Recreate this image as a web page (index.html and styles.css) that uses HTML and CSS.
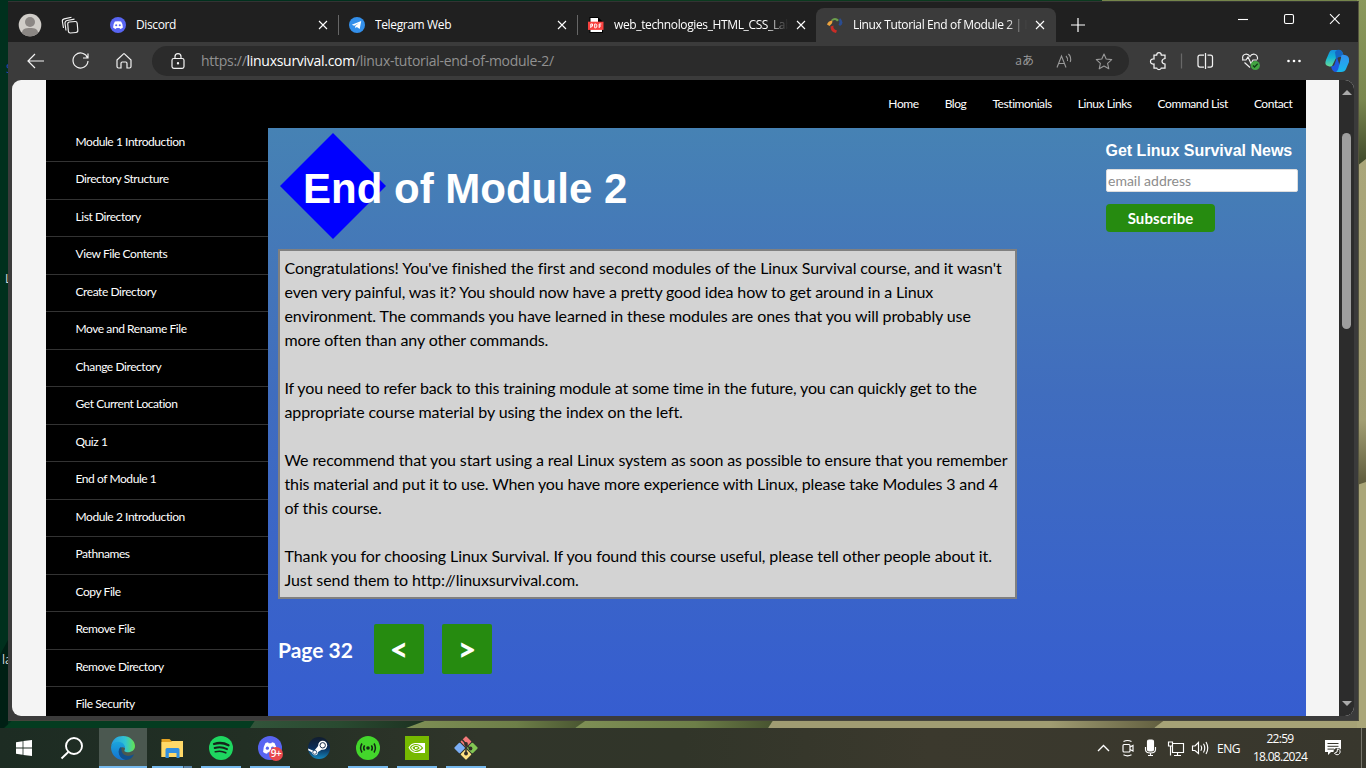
FILE: index.html
```html
<!DOCTYPE html>
<html lang="en">
<head>
<meta charset="utf-8">
<title>Linux Tutorial End of Module 2</title>
<link rel="stylesheet" href="styles.css">
</head>
<body>
<div class="desktop">
  <svg class="wallpaper" width="1366" height="768" viewBox="0 0 1366 768">
    <defs>
      <linearGradient id="wa" x1="0" x2="1"><stop offset="0" stop-color="#32543a"/><stop offset=".5" stop-color="#294a30"/><stop offset="1" stop-color="#1c3020"/></linearGradient>
      <linearGradient id="wb" x1="0" x2="1"><stop offset="0" stop-color="#7f8f55"/><stop offset=".6" stop-color="#6d7e48"/><stop offset="1" stop-color="#46522f"/></linearGradient>
      <linearGradient id="wc" x1="0" x2="1"><stop offset="0" stop-color="#a09c72"/><stop offset=".7" stop-color="#a09c72"/><stop offset="1" stop-color="#5d5a3c"/></linearGradient>
      <linearGradient id="wd" x1="0" x2="0" y1="0" y2="1"><stop offset="0" stop-color="#8b995c"/><stop offset=".6" stop-color="#7a874f"/><stop offset="1" stop-color="#3f482a"/></linearGradient>
      <linearGradient id="we" x1="0" x2="0" y1="0" y2="1"><stop offset="0" stop-color="#aaa67a"/><stop offset=".8" stop-color="#a29e73"/><stop offset="1" stop-color="#5c593b"/></linearGradient>
    </defs>
    <rect width="1366" height="768" fill="#00301d"/>
    <path d="M0 655 8 640V728H0z" fill="#001f14"/>
    <path d="M4 728 14 719H260V728z" fill="#043c20"/>
    <path d="M250 728 256 719H430L406 728z" fill="url(#wa)"/>
    <path d="M406 728 430 719H590L575 728z" fill="url(#wb)"/>
    <path d="M575 728 588 719H775L768 728z" fill="url(#wb)"/>
    <path d="M768 728 774 719H1170L1154 728z" fill="url(#wc)"/>
    <path d="M1154 728 1166 719H1366V728z" fill="#a6a276"/>
    <rect x="540" width="562" height="2" fill="#0b3a1f"/>
    <rect x="1102" width="264" height="2" fill="#75854b"/>
    <rect x="1357" width="9" height="165" fill="url(#wd)"/>
    <path d="M1357 166 1366 159V483L1357 486z" fill="url(#we)"/>
    <path d="M1357 485 1366 482V728H1357z" fill="#aaa679"/>
  </svg>
  <span class="desk-label dl-1">S</span>
  <span class="desk-label dl-2">L</span>
  <span class="desk-label dl-3">la</span>

  <div class="window">
    <div class="tabstrip">
      <svg class="avatar" width="24" height="24" viewBox="0 0 24 24"><circle cx="12" cy="12" r="11.3" fill="#d0cdc8"/><circle cx="12" cy="9" r="5" fill="#8b8784"/><path d="M4 20c0-4 3-5 8-5s8 1 8 5a11 11 0 0 1-16 0z" fill="#8b8784"/></svg>
      <svg class="workspaces" width="18" height="18" viewBox="0 0 18 18" fill="none" stroke="#f2f2f2" stroke-width="1.15"><rect x="7" y="5.8" width="9.5" height="11" rx="2" transform="rotate(-5 11 11)"/><path d="M5 14.5 4 7.3Q3.9 5 6 4.5L13.5 3.1M2.5 12 1.4 5.5Q1.1 3.4 3.2 2.9L10.5 1.2"/></svg>
      <div class="tab t1">
        <svg width="16" height="16" viewBox="0 0 16 16"><circle cx="8" cy="8" r="8" fill="#5865f2"/><path d="M4.9 4.6Q8 3.8 11.1 4.6 13 7.3 12.9 10.6 11.5 11.7 10.2 11.9L9.5 10.9H6.5L5.8 11.9Q4.5 11.7 3.1 10.6 3 7.3 4.9 4.6z" fill="#fff"/><circle cx="6.2" cy="8.2" r="1.05" fill="#5865f2"/><circle cx="9.8" cy="8.2" r="1.05" fill="#5865f2"/></svg>
        <span class="tab-title">Discord</span>
        <svg class="x" width="10" height="10" viewBox="0 0 10 10"><path d="M1 1l8 8M9 1 1 9"/></svg>
      </div>
      <div class="tab t2">
        <svg width="16" height="16" viewBox="0 0 16 16"><circle cx="8" cy="8" r="8" fill="#338fea"/><path d="M2.8 7.8 12.2 4 10.7 12 7.8 9.9 6.4 11.3 6.2 9 10 5.9 5.2 8.8z" fill="#fff"/></svg>
        <span class="tab-title">Telegram Web</span>
        <svg class="x" width="10" height="10" viewBox="0 0 10 10"><path d="M1 1l8 8M9 1 1 9"/></svg>
      </div>
      <div class="tab t3">
        <svg width="16" height="16" viewBox="0 0 16 16"><path d="M1.5 0H10L15 5V16H1.5z" fill="#000"/><path d="M2.5 1H10V5H14V15H2.5z" fill="#fff"/><rect x="0" y="4.7" width="15.5" height="8.2" fill="#f8413f"/><g fill="none" stroke="#fff" stroke-width="1"><path d="M2.8 11V7H4.5V9.2H2.8M6.7 7V10.8H7.7Q8.9 10.8 8.9 8.9T7.7 7zM11.2 11V7H13.3M11.2 9H13"/></g></svg>
        <span class="tab-title fade">web_technologies_HTML_CSS_Lab</span>
        <svg class="x" width="10" height="10" viewBox="0 0 10 10"><path d="M1 1l8 8M9 1 1 9"/></svg>
      </div>
      <div class="tab t4 active">
        <svg width="16" height="16" viewBox="0 0 16 16"><path d="M4 3Q8-1 12 3L10 4.500Q8 2 5.500 4z" fill="#6c9f4c"/><path d="M13 1Q18 6 13 9L11.500 7.500Q13 6 12 3z" fill="#2a4c91"/><path d="M5 3.500Q6.500 5.500 2.500 9L0 7.500Q1 4 5 3.500z" fill="#eca33e"/><path d="M3.500 9.500 6.500 8.500Q5.500 12 10 13.500L9 16Q3.500 15 3.500 9.500z" fill="#c92c26"/></svg>
        <span class="tab-title fade">Linux Tutorial End of Module 2 | Linux</span>
        <svg class="x" width="10" height="10" viewBox="0 0 10 10"><path d="M1 1l8 8M9 1 1 9"/></svg>
      </div>
      <svg class="plus" width="14" height="14" viewBox="0 0 14 14" fill="none" stroke="#fff" stroke-width="1.2"><path d="M7 0V14M0 7H14"/></svg>
      <svg class="winbtns" width="104" height="12" viewBox="0 0 104 12" fill="none" stroke="#fff" stroke-width="1.1"><path d="M1 6.5H11"/><rect x="47.5" y="1.5" width="9" height="9" rx="1.5"/><path d="M93 1.2l9.6 9.6M102.600 1.200 93 10.800"/></svg>
    </div>

    <div class="toolbar">
      <svg class="nav-icons" width="110" height="20" viewBox="0 0 110 20" fill="none" stroke="#f4f4f4" stroke-width="1.2"><path d="M8 3 1 10 8 17M1 10H17"/><path d="M60.600 7A7.500 7.500 0 1 0 61 10M61 2.500V7H56"/><path d="M90 9 96.500 2.900Q97 2.500 97.500 2.900L104 9V15.500Q104 17 102.500 17H100V12.500Q100 11 98.700 11H95.300Q94 11 94 12.500V17H91.500Q90 17 90 15.500z"/></svg>
      <div class="address">
        <svg width="14" height="16" viewBox="0 0 14 16" fill="none" stroke="#f4f4f4" stroke-width="1.2"><rect x="1" y="5.500" width="12" height="9.800" rx="1.800"/><path d="M4 5.500V3.600A3 3 0 0 1 10 3.600V5.500"/><circle cx="7" cy="10.300" r=".6" fill="#fff"/></svg>
        <span class="url">https://<b>linuxsurvival.com</b>/linux-tutorial-end-of-module-2/</span>
        <span class="translate">aあ</span>
        <svg class="read" width="17" height="16" viewBox="0 0 17 16" fill="none" stroke="#999" stroke-width="1.1"><path d="M1 14.500 5.500 3 10 14.500M2.700 10.500H8.300M10 3Q12 5 11.500 8M12.400 1Q15.800 4.300 14.200 9"/></svg>
        <svg class="star" width="18" height="17" viewBox="0 0 18 17" fill="none" stroke="#999" stroke-width="1.1" stroke-linejoin="round"><path d="M9 1 11.200 6 16.700 6.600 12.600 10.300 13.800 15.800 9 13 4.200 15.800 5.400 10.300 1.300 6.600 6.800 6z"/></svg>
      </div>
      <svg class="tools" width="156" height="26" viewBox="0 0 156 26" fill="none" stroke="#f2f2f2" stroke-width="1.25">
        <path d="M6 7H8.700Q8.800 4.500 11 4.500T13.300 7H17V10.500Q14 11 14 13.300T17 16V20H13.300Q13 21.500 11 21.500T8.700 20H6V16Q2.500 16.200 2.500 13.500T6 11z"/>
        <path d="M33.500 5.500V20.500" stroke="#686868"/>
        <path d="M56 7H52Q50 7 50 9V17Q50 19 52 19H56M59.500 7H62.500Q64.500 7 64.500 9V17Q64.500 19 62.500 19H59.500M57.500 5V21"/>
        <path d="M102 19.500 96.500 14.500M95 12Q93.500 7 97.500 6.200 100.500 5.700 102 8.500 103.500 5.700 106.500 6.200 110 7 109.500 11.500" stroke-width="1.150"/><path d="M94 12H98L100 9 103 15.500 105 12H109" stroke-width="1.150"/>
        <circle cx="107.300" cy="17.500" r="4.600" fill="#42a442" stroke="none"/><path d="M105 17.500 106.500 19 109.700 15.800" stroke="#123d18"/>
        <g fill="#fff" stroke="none"><circle cx="140.500" cy="13" r="1.300"/><circle cx="146" cy="13" r="1.300"/><circle cx="151.500" cy="13" r="1.300"/></g>
      </svg>
      <svg class="copilot" width="26" height="26" viewBox="0 0 26 26"><defs><linearGradient id="cp" x1="0" x2="0" y1="0" y2="1"><stop offset="0" stop-color="#168fdd"/><stop offset=".45" stop-color="#12b4d5"/><stop offset="1" stop-color="#68db98"/></linearGradient><linearGradient id="cq" x1="0" x2="0" y1="0" y2="1"><stop offset="0" stop-color="#3290f0"/><stop offset="1" stop-color="#17b9ed"/></linearGradient></defs><path d="M8 2H15Q18 2 19 6L21 9H14Q12 9 11 12L8 18Q7 19 4 18 0 17 2 12L5 5Q6 2 8 2z" fill="url(#cp)"/><path d="M13 2Q18 1 19 6L20 9Q15 8 12 11L11 4z" fill="#1567c4"/><path d="M7 18Q10 19 11 15L13 9 17 22Q15 24 12 24 8 24 7 18z" fill="#1e59df"/><path d="M18 7H21Q26 8 25 14L22 21Q21 24 17 24H12Q14 23 15 18L17 10Q17 7 18 7z" fill="url(#cq)"/></svg>
    </div>

    <div class="viewport">
      <div class="site">
        <nav class="topnav"><a>Home</a><a>Blog</a><a>Testimonials</a><a>Linux Links</a><a>Command List</a><a>Contact</a></nav>
        <div class="site-body">
          <ul class="sidebar">
            <li>Module 1 Introduction</li><li>Directory Structure</li><li>List Directory</li><li>View File Contents</li><li>Create Directory</li><li>Move and Rename File</li><li>Change Directory</li><li>Get Current Location</li><li>Quiz 1</li><li>End of Module 1</li><li>Module 2 Introduction</li><li>Pathnames</li><li>Copy File</li><li>Remove File</li><li>Remove Directory</li><li>File Security</li>
          </ul>
          <main class="main">
            <div class="lesson">
              <div class="heading">
                <svg class="diamond" width="106" height="106" viewBox="0 0 106 106"><path d="M53 0 106 53 53 106 0 53z" fill="#00f"/></svg>
                <h1>End of Module 2</h1>
              </div>
              <div class="textbox">
                <p><span class="ls-1">Congratulations! You've finished the first and second modules of the Linux Survival course, and it wasn't</span><br><span class="ls-3">even very painful, was it? You should now have a pretty good idea how to get around in a Linux</span><br><span class="ls-2">environment. The commands you have learned in these modules are ones that you will probably use</span><br><span class="ls-2">more often than any other commands.</span></p>
                <p><span class="ls-3">If you need to refer back to this training module at some time in the future, you can quickly get to the</span><br><span class="ls-2">appropriate course material by using the index on the left.</span></p>
                <p><span class="ls-2">We recommend that you start using a real Linux system as soon as possible to ensure that you remember</span><br><span class="ls-3">this material and put it to use. When you have more experience with Linux, please take Modules 3 and 4</span><br><span class="ls-1">of this course.</span></p>
                <p><span class="ls-2">Thank you for choosing Linux Survival. If you found this course useful, please tell other people about it.</span><br><span class="ls-1">Just send them to http://linuxsurvival.com.</span></p>
              </div>
              <div class="pager"><span>Page 32</span><button>&lt;</button><button>&gt;</button></div>
            </div>
            <aside class="news">
              <h2>Get Linux Survival News</h2>
              <input type="text" placeholder="email address">
              <button>Subscribe</button>
            </aside>
          </main>
        </div>
      </div>
      <div class="scrollbar"><i class="up"></i><i class="thumb"></i><i class="down"></i></div>
    </div>
  </div>

  <div class="taskbar">
    <div class="task start"><svg width="16" height="16" viewBox="0 0 16 16" fill="#fff"><path d="M0 2.200 6.600 1.200V7.500H0zM7.400 1.100 16 0V7.500H7.400zM0 8.400H6.600V14.700L0 13.800zM7.400 8.400H16V16L7.400 14.900z"/></svg></div>
    <div class="task search"><svg width="24" height="24" viewBox="0 0 24 24" fill="none" stroke="#fff" stroke-width="1.900"><circle cx="14" cy="10" r="8"/><path d="M8.300 16 1.500 22.500"/></svg></div>
    <div class="task open on"><svg width="24" height="24" viewBox="0 0 24 24"><defs><linearGradient id="e1" x1="0" x2="1"><stop offset="0" stop-color="#269be0"/><stop offset=".6" stop-color="#31c4d2"/><stop offset="1" stop-color="#65e34e"/></linearGradient><linearGradient id="e2" x1="0" x2="0" y1="0" y2="1"><stop offset="0" stop-color="#1ba5dc"/><stop offset="1" stop-color="#1471cf"/></linearGradient></defs><path d="M0 11C1 3 6 0 12 0c7 0 12 5 12 10 0 5-5 7-9 6-2-1-2-1-1-3 0-4-4-6-8-6-3 0-5 1-6 4z" fill="url(#e1)"/><path d="M0 11C1 7 5 5 9 6c4 1 5 4 5 6-4-2-7 1-6 5 1 4 4 6 7 7C7 25 0 20 0 11z" fill="url(#e2)"/><path d="M10 11c-4 2-3 12 5 13 4 0 7-3 8-6-6 4-11 1-12-2-1-2 0-4-1-5z" fill="#12508d"/></svg></div>
    <div class="task open group"><svg width="24" height="24" viewBox="0 0 24 24"><path d="M1.500 3H9.500L11.500 5H22V21H1.500z" fill="#e4a323"/><path d="M1.500 6H11L12.500 5H23V21H1.500z" fill="#ffd968"/><path d="M5.500 13.500Q5.500 12 7 12H18Q19.500 12 19.500 13.500V22H16.500V17H8.800V22H5.500z" fill="#318fe0"/></svg></div>
    <div class="task open"><svg width="24" height="24" viewBox="0 0 24 24"><circle cx="12" cy="12" r="12" fill="#1ed760"/><g fill="none" stroke="#15251c" stroke-linecap="round"><path d="M5 8Q12.500 5.500 19.500 9.200" stroke-width="2.300"/><path d="M5.700 12Q12 10 18 13.100" stroke-width="2"/><path d="M6.300 15.800Q12 14.200 16.800 16.800" stroke-width="1.600"/></g></svg></div>
    <div class="task open discord"><svg width="24" height="24" viewBox="0 0 24 24"><circle cx="12" cy="12" r="12" fill="#5865f2"/><path d="M7.500 7 10 6.200 10.700 7.200H13.300L14 6.200 16.500 7Q19 11 18.900 16 17 17.500 15 17.800L14 16.300H10L9 17.800Q7 17.500 5.100 16 5 11 7.500 7z" fill="#fff"/><circle cx="9.400" cy="12.200" r="1.600" fill="#5865f2"/><circle cx="14.600" cy="12.200" r="1.600" fill="#5865f2"/></svg><span class="badge">9+</span></div>
    <div class="task"><svg width="24" height="24" viewBox="0 0 24 24"><defs><linearGradient id="st" x1="0" x2="0" y1="0" y2="1"><stop offset="0" stop-color="#111d2e"/><stop offset=".5" stop-color="#0b2c57"/><stop offset="1" stop-color="#1487bd"/></linearGradient></defs><circle cx="12" cy="12" r="11" fill="url(#st)"/><circle cx="15.700" cy="9.300" r="4.500" fill="#fff"/><circle cx="15.700" cy="9.300" r="2.700" fill="none" stroke="#152947" stroke-width="1"/><path d="M1 12.500 7 15 11.500 9.500 15 13.500 11 16Q10.500 20 7 19 5 18 4.500 16L1.500 14.500z" fill="#fff"/><circle cx="7.700" cy="16.300" r="2" fill="none" stroke="#163c64" stroke-width=".8"/></svg></div>
    <div class="task open"><svg width="24" height="24" viewBox="0 0 24 24"><circle cx="12" cy="12" r="12" fill="#43d62b"/><g fill="none" stroke="#122814" stroke-width="1.500"><path d="M8.600 9.300Q6.800 12 8.600 14.700M15.400 9.300Q17.200 12 15.400 14.700M6 7.500Q3.200 12 6 16.500M18 7.500Q20.800 12 18 16.500"/></g><circle cx="12" cy="12" r="1.800" fill="#122814"/></svg></div>
    <div class="task open"><svg width="24" height="24" viewBox="0 0 24 24"><rect width="24" height="24" fill="#76b900"/><path d="M10 7H20V17H10z" fill="#fff"/><g fill="none" stroke="#fff" stroke-width="1.200"><path d="M10 7.500Q6 8 4.200 11.500 6 15.500 10 16.300"/><path d="M10 9.500Q7.600 10 6.800 11.700 8 14 10 14.300"/></g><g fill="none" stroke="#76b900" stroke-width="1.200"><path d="M10 8.500Q15 8.200 17.500 12 14.500 15.500 10 15.500M10 10.500Q13 10.200 14 12 12.500 13.700 10 13.500"/></g></svg></div>
    <div class="task open"><svg width="24" height="24" viewBox="0 0 24 24"><g transform="rotate(45 12 12)"><rect x="3.500" y="3.500" width="8" height="8" rx="1" fill="#f47a7a"/><rect x="12.500" y="3.500" width="8" height="8" rx="1" fill="#82c653"/><rect x="3.500" y="12.500" width="8" height="8" rx="1" fill="#7baef5"/><rect x="12.500" y="12.500" width="8" height="8" rx="1" fill="#ffe383"/></g><path d="M8 3.500 12 8V18M12 9 16.500 12.500" fill="none" stroke="#38342d" stroke-width="1.500"/><g fill="#302d28"><circle cx="12" cy="8" r="1.900"/><circle cx="12" cy="17.500" r="1.900"/><circle cx="16.500" cy="12.500" r="1.900"/></g></svg></div>

    <div class="tray">
      <svg width="112" height="20" viewBox="0 0 112 20" fill="none" stroke="#fff" stroke-width="1.150">
        <path d="M1 13 6.500 7.500 12 13" stroke-width="1.400"/>
        <rect x="26" y="6.500" width="7" height="7.500" rx="1"/><path d="M33 9 36 7.500V13L33 11.500M26.500 3.500Q30.500 1.500 34.500 3.500M26.500 16.800Q30.500 18.800 34.500 16.800"/>
        <rect x="50.500" y="2" width="6" height="11" rx="1.500" fill="#fff"/><path d="M48.500 9V11.500Q48.500 15 53.500 15T58.500 11.500V9M53.500 15V18M51 17.500H56"/>
        <path d="M76 5.500H86.500V14.500H75.500V8M80.500 14.500V17.500M77 17.500H84M71.500 4H75.500V8H71.500zM73.500 8V17.500"/>
        <path d="M95.500 8H98L101.500 4.500V15.500L98 12.500H95.500zM103.800 7.500Q105.500 10 103.800 12.800M106.500 5.800Q109 10 106.500 14.500M109 4Q112.500 10 109 16"/>
      </svg>
      <span class="lang">ENG</span>
      <div class="clock"><span>22:59</span><span class="date">18.08.2024</span></div>
      <svg class="notif" width="18" height="18" viewBox="0 0 18 18"><path d="M1 1H17V13H7L4 16V13H1z" fill="#fff"/><path d="M3.500 4.500H14.500M3.500 7.300H14.500M3.500 10.100H10" stroke="#38372d"/><circle cx="13.500" cy="13" r="4" fill="#38372d"/><path d="M13.500 9.800A3 3 0 1 1 10.500 14.200Q14 14 13.500 9.800z" fill="none" stroke="#fff"/></svg>
    </div>
    <i class="peek"></i>
  </div>
</div>
</body>
</html>
```
FILE: styles.css
```css
* { box-sizing: border-box; }
body { margin: 0; overflow: hidden; font-family: "Open Sans", "Noto Sans", sans-serif; }
svg { display: block; flex: none; }
.desktop { position: relative; width: 1366px; height: 768px; padding: 1px 8px 0; overflow: hidden; }
.wallpaper { position: absolute; left: 0; top: 0; }
.desk-label { position: absolute; color: #ddd; font-size: 12px; line-height: 16px; white-space: nowrap; }
.dl-1 { left: 6px; top: 61px; color: #3344b8; }
.dl-2 { left: 5px; top: 271px; }
.dl-3 { left: 2px; top: 652px; }

.window { position: relative; width: 1351px; height: 720px; background: #3b3b3b; border-top: 1px solid #333; border-right: 1px solid #55543f; border-bottom: 1px solid #45443c; display: flex; flex-direction: column; }
.tabstrip { height: 40px; background: #202020; display: flex; align-items: center; padding-top: 6px; flex: none; }
.avatar { margin-left: 10px; }
.workspaces { margin-left: 19px; }
.tab { display: flex; align-items: center; height: 34px; color: #fff; }
.t1 { width: 239px; margin-left: 21px; padding-left: 10px; padding-right: 11px; }
.t2 { width: 239px; padding-left: 10px; padding-right: 11px; }
.t3 { width: 238px; padding-left: 10px; padding-right: 10px; }
.t2::before, .t3::before { content: ""; width: 1px; height: 20px; background: #666; margin-left: -11px; margin-right: 10px; }
.t4 { width: 240px; padding-left: 11px; padding-right: 11px; background: #3b3b3b; border-radius: 8px 8px 0 0; }
.tab-title { font-size: 12px; line-height: 18px; margin-left: 10px; flex: 1; min-width: 0; white-space: nowrap; overflow: hidden; letter-spacing: -.37px; }
.fade { margin-right: 8px; -webkit-mask-image: linear-gradient(90deg, #000 88%, transparent); mask-image: linear-gradient(90deg, #000 88%, transparent); }
.x { stroke: #fff; stroke-width: 1.1; fill: none; }
.plus { margin-left: 15px; }
.winbtns { margin: -12px 17px 0 auto; }

.toolbar { height: 38px; display: flex; align-items: center; flex: none; background: #3b3b3b; position: relative; }
.nav-icons { margin-left: 19px; }
.address { width: 977px; height: 30px; margin-left: 15px; border-radius: 15px; background: #2b2b2b; display: flex; align-items: center; padding: 0 16px 0 19px; }
.url { margin-left: 16px; font-size: 14px; line-height: 20px; color: #919191; letter-spacing: -.28px; }
.url b { color: #fff; font-weight: 400; }
.translate { margin-left: auto; font: 12px/16px "Open Sans", "Noto Sans CJK JP", sans-serif; color: #999; }
.read { margin-left: 22px; }
.star { margin-left: 22px; }
.tools { margin-left: 19px; }
.copilot { position: absolute; right: 8px; top: 6px; }

.viewport { margin: 0 4px 0 4px; height: 636px; width: 1342px; border-radius: 9px; overflow: hidden; background: #f4f4f4; display: flex; justify-content: space-between; flex: none; }
.site { width: 1260px; margin-left: 34px; background: #000; font-family: Lato, sans-serif; color: #fff; }
.topnav { height: 48px; display: flex; justify-content: flex-end; align-items: center; gap: 26px; padding: 0 13.500px 1px 0; font-size: 12px; letter-spacing: -.43px; }
.site-body { display: flex; height: 588px; }
.sidebar { list-style: none; width: 222px; margin: -3.5px 0 0; padding: 0; font-size: 12px; letter-spacing: -.43px; flex: none; }
.sidebar li { height: 37.5px; line-height: 34.5px; padding-left: 29.500px; border-bottom: 1px solid #333; }
.main { width: 1038px; display: flex; background: linear-gradient(#4682b4, #4476b9 25%, #406dbe 45%, #3963ca 80%, #365dd0); }
.lesson { width: 749px; padding-left: 10px; }
.heading { height: 121px; position: relative; padding: 36px 0 0 25px; }
.diamond { position: absolute; left: 2px; top: 5px; }
h1 { position: relative; margin: 0; font: bold 42px/50px "Liberation Sans", Arial, sans-serif; white-space: nowrap; }
.textbox { width: 739px; height: 350px; background: #d3d3d3; border: 2px solid #808080; padding: 5px 4.500px; color: #000; font-size: 16px; line-height: 24px; white-space: nowrap; }
.textbox p { margin: 0 0 24px; }
.ls-1 { letter-spacing: -.07px; }
.ls-2 { letter-spacing: -.1px; }
.ls-3 { letter-spacing: -.14px; }
.pager { display: flex; align-items: center; margin-top: 25px; font-size: 21px; font-weight: 700; }
.pager span { width: 96px; }
.pager button { width: 50px; height: 50px; border: 0; border-radius: 2px; background: #268b10; color: #fff; padding: 0; margin-right: 18px; font: 900 32px/50px Lato, sans-serif; }
.news { margin-left: 89px; padding-top: 13px; }
.news h2 { margin: 0 0 8px; font: bold 16px/20px "Liberation Sans", Arial, sans-serif; white-space: nowrap; margin-left: -.5px; }
.news input { display: block; width: 192px; height: 23px; border: 1px solid #ddd; border-radius: 2px; padding: 1px 1px; font: 14px Lato, sans-serif; }
.news input::placeholder { color: #8c8c8c; opacity: 1; }
.news button { display: block; margin-top: 12px; width: 109px; height: 28px; border: 0; border-radius: 4px; background: #268b10; color: #fff; font: bold 15px Lato, sans-serif; letter-spacing: .1px; }
.scrollbar { width: 15px; background: #2c2c2c; display: flex; flex-direction: column; align-items: center; padding: 10px 0; }
.up, .down { width: 0; height: 0; border: 5px solid transparent; border-top: 0; border-bottom: 5px solid #aaa; }
.down { border-top: 5px solid #aaa; border-bottom: 0; margin-top: auto; }
.thumb { width: 9px; height: 196px; border-radius: 4.500px; background: #9e9e9e; margin-top: 38px; }

.taskbar { position: relative; margin: 7px -8px 0; height: 40px; background: linear-gradient(90deg, #1d2c23, #222f24 18%, #30352a 35%, #313529 50%, #3b392d 68%, #38372d); display: flex; align-items: center; }
.task { width: 48px; margin-right: 1px; height: 40px; display: flex; align-items: center; justify-content: center; position: relative; }
.start { width: 48px; margin-right: 0; }
.search { margin-right: 3px; }
.on { background: #4b5850; }
.open::after { content: ""; position: absolute; left: 4px; right: 4px; bottom: 0; height: 2px; background: #76b9ed; }
.on::after { left: 0; right: 0; }
.group::after { background: linear-gradient(90deg, #76b9ed 31px, #3b5569 31px, #3b5569 32px, #5a86aa 32px); }
.badge { position: absolute; left: 23px; top: 19px; width: 14px; height: 14px; border-radius: 7px; background: #e8484d; color: #fff; font-size: 10px; line-height: 13px; text-align: center; font-weight: 600; letter-spacing: -.5px; }
.tray { margin-left: auto; display: flex; align-items: center; color: #fff; font-size: 12px; padding-right: 24px; }
.lang { margin-left: 8px; width: 23px; font-size: 12px; letter-spacing: -.5px; }
.clock { width: 54px; margin-left: 13px; display: flex; flex-direction: column; align-items: center; line-height: 18px; letter-spacing: -.7px; }
.notif { margin-left: 17px; }
.peek { position: absolute; left: 1361px; top: 0; width: 1px; height: 40px; background: #77766c; }
```
